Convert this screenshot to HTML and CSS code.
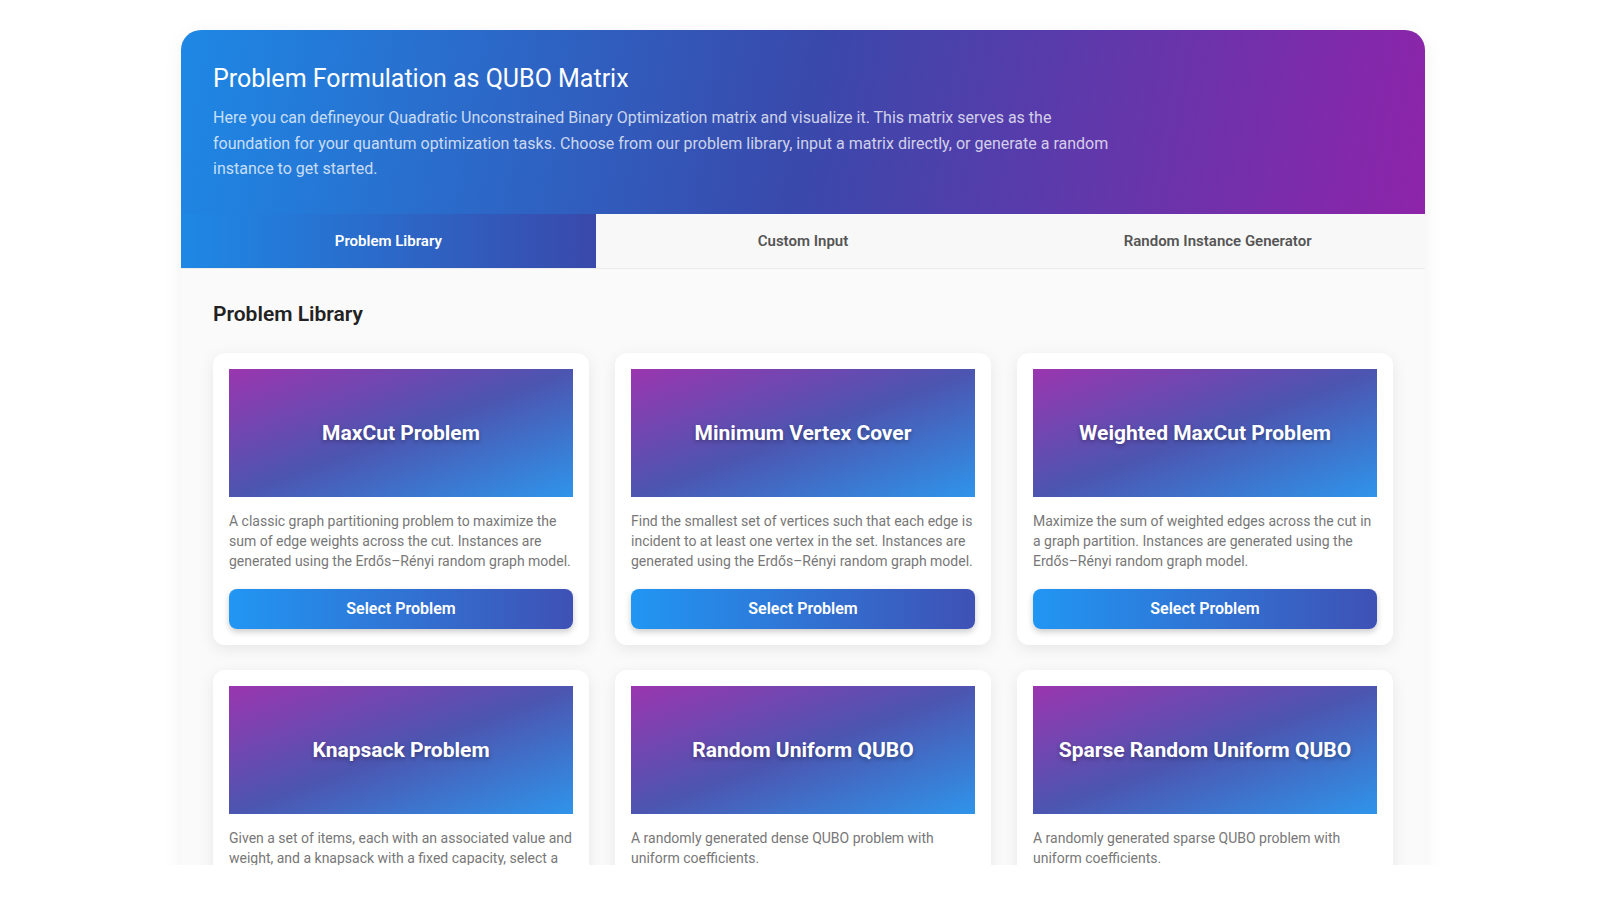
FILE: index.html
```html
<!DOCTYPE html>
<html lang="en">
<head>
  <meta charset="UTF-8">
  <meta name="viewport" content="width=device-width, initial-scale=1.0">
  <title>QUBO Matrix - Problem Formulation</title>
  <link rel="stylesheet" href="styles.css">
</head>
<body>
  <div class="page">
    <div class="app">
      <header class="hero">
        <h1>Problem Formulation as QUBO Matrix</h1>
        <p>Here you can defineyour Quadratic Unconstrained Binary Optimization matrix and visualize it. This matrix serves as the foundation for your quantum optimization tasks. Choose from our problem library, input a matrix directly, or generate a random instance to get started.</p>
      </header>

      <nav class="tabs">
        <button class="tab active">Problem Library</button>
        <button class="tab">Custom Input</button>
        <button class="tab">Random Instance Generator</button>
      </nav>

      <section class="panel">
        <h2>Problem Library</h2>

        <div class="grid">
          <div class="card">
            <div class="banner">MaxCut Problem</div>
            <p class="desc">A classic graph partitioning problem to maximize the sum of edge weights across the cut. Instances are generated using the Erdős–Rényi random graph model.</p>
            <button class="select">Select Problem</button>
          </div>

          <div class="card">
            <div class="banner">Minimum Vertex Cover</div>
            <p class="desc">Find the smallest set of vertices such that each edge is incident to at least one vertex in the set. Instances are generated using the Erdős–Rényi random graph model.</p>
            <button class="select">Select Problem</button>
          </div>

          <div class="card">
            <div class="banner">Weighted MaxCut Problem</div>
            <p class="desc">Maximize the sum of weighted edges across the cut in a graph partition. Instances are generated using the Erdős–Rényi random graph model.</p>
            <button class="select">Select Problem</button>
          </div>

          <div class="card">
            <div class="banner">Knapsack Problem</div>
            <p class="desc">Given a set of items, each with an associated value and weight, and a knapsack with a fixed capacity, select a subset of items that maximizes the total value without exceeding the capacity.</p>
            <button class="select">Select Problem</button>
          </div>

          <div class="card">
            <div class="banner">Random Uniform QUBO</div>
            <p class="desc">A randomly generated dense QUBO problem with uniform coefficients.</p>
            <button class="select">Select Problem</button>
          </div>

          <div class="card">
            <div class="banner">Sparse Random Uniform QUBO</div>
            <p class="desc">A randomly generated sparse QUBO problem with uniform coefficients.</p>
            <button class="select">Select Problem</button>
          </div>
        </div>
      </section>
    </div>
  </div>
</body>
</html>
```

FILE: styles.css
```css
body {
  margin: 0;
  background: #fff;
  font-family: Roboto, "Liberation Sans", Arial, sans-serif;
  color: #222;
}
.page {
  height: 865px;
  overflow: hidden;
  padding: 30px 0 0 6px;
  box-sizing: border-box;
}
.app {
  max-width: 1244px;
  margin: 0 auto;
  border-radius: 20px 20px 0 0;
  overflow: hidden;
  background: #fafafa;
  box-shadow: 0 4px 20px rgba(0, 0, 0, 0.06);
}

/* header */
.hero {
  background: linear-gradient(100deg, #1e88e5 0%, #3949ab 50%, #8e24aa 100%);
  color: #fff;
  padding: 34px 32px 32px;
}
.hero h1 {
  margin: 0 0 11px;
  font-size: 25px;
  font-weight: 400;
  line-height: 1.2;
}
.hero p {
  margin: 0;
  max-width: 900px;
  font-size: 16px;
  line-height: 1.6;
  color: rgba(255, 255, 255, 0.76);
}

/* tabs */
.tabs {
  display: grid;
  grid-template-columns: repeat(3, 1fr);
  background: #f8f8f8;
  border-bottom: 1px solid #ececec;
}
.tab {
  border: none;
  background: none;
  padding: 18px 0;
  font-family: inherit;
  font-size: 15px;
  font-weight: 600;
  line-height: 18px;
  color: #555;
  cursor: pointer;
}
.tab.active {
  background: linear-gradient(to right, #1e88e5, #3949ab);
  color: #fff;
}

/* library */
.panel {
  padding: 33px 32px 32px;
}
.panel h2 {
  margin: 0 0 26px;
  font-size: 21px;
  font-weight: 600;
  line-height: 1.2;
  color: #222;
}
.grid {
  display: grid;
  grid-template-columns: repeat(3, 1fr);
  gap: 25px 26px;
}
.card {
  display: flex;
  flex-direction: column;
  background: #fff;
  border-radius: 12px;
  padding: 16px;
  box-shadow: 0 4px 15px rgba(0, 0, 0, 0.08);
}
.banner {
  height: 128px;
  display: flex;
  align-items: center;
  justify-content: center;
  background: linear-gradient(to bottom right, #9b36b0 0%, #4c55b0 50%, #2f94ea 100%);
  color: #fff;
  font-size: 21px;
  font-weight: 700;
  text-shadow: 0 2px 4px rgba(0, 0, 0, 0.3);
}
.desc {
  margin: 14px 0 18px;
  font-size: 14px;
  line-height: 20px;
  color: #777;
}
.select {
  margin-top: auto;
  height: 40px;
  border: none;
  border-radius: 8px;
  background: linear-gradient(to right, #2196f3, #3f51b5);
  color: #fff;
  font-family: inherit;
  font-size: 16px;
  font-weight: 600;
  box-shadow: 0 3px 6px rgba(0, 0, 0, 0.2);
  cursor: pointer;
}
```
